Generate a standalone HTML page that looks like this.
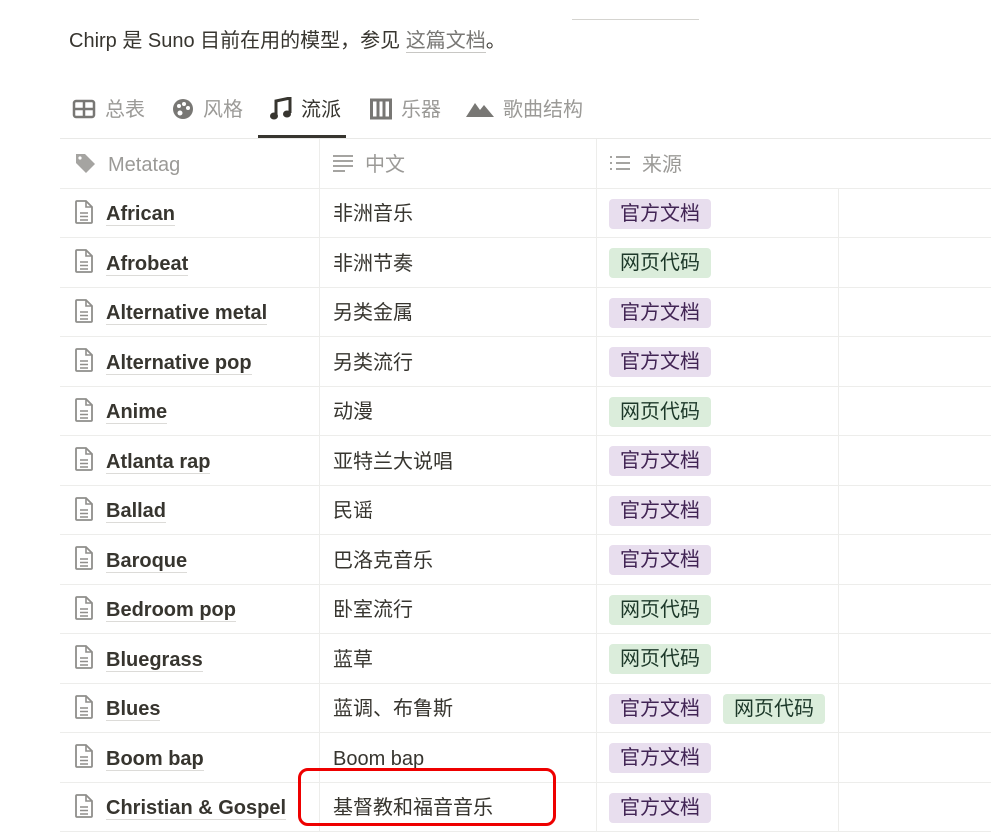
<!DOCTYPE html>
<html><head><meta charset="utf-8"><style>
body{margin:0;width:991px;height:829px;overflow:hidden;background:#fff;font-family:"Liberation Sans","Noto Sans CJK SC",sans-serif;color:#37352f;position:relative}
.p{position:absolute;left:69px;top:26px;font-size:20px;line-height:30px}
.p u{text-decoration:none;color:#787774;border-bottom:1px solid #c8c7c4}
.topline{position:absolute;left:572px;top:19px;width:127px;height:1px;background:#d5d4d0}
.tabs{position:absolute;left:60px;top:92px;height:46px;width:931px;border-bottom:1px solid #e9e9e7}
.tab{position:absolute;top:1px;line-height:34px;font-size:20px;color:#9b9a97;white-space:nowrap}
.tab svg{display:inline-block;vertical-align:middle;margin-right:9px;position:relative;top:-2px}
.tab.on{color:#37352f}
.ul{position:absolute;left:198px;top:43px;width:88px;height:3px;background:#37352f}
.row{position:absolute;left:60px;width:931px;border-bottom:1px solid #ededeb;font-size:20px}
.c{position:absolute;top:2px;height:49px;line-height:49px;white-space:nowrap}
.c svg{display:inline-block;vertical-align:middle;margin-right:12px;position:relative;top:-3px}
.v{position:absolute;top:0;width:1px;height:100%;background:#ededeb}
.n{font-weight:bold;border-bottom:1px solid #dcdbd8;line-height:22px;display:inline-block;color:#37352f}
.tg{display:inline-block;vertical-align:middle;padding:0 11px;border-radius:4px;height:30px;line-height:30px;margin-right:12px;position:relative;top:-1px}
.g1{background:#e8deee;color:#412454}
.g2{background:#dbeddb;color:#1c3829}
</style></head><body>
<div class="topline"></div>
<div class="p">Chirp 是 Suno 目前在用的模型，参见 <u>这篇文档</u>。</div>
<div class="tabs">
 <div class="tab" style="left:12px"><svg width="24" height="20" viewBox="0 0 24 20"><rect x="2" y="2" width="20" height="16" rx="2" fill="none" stroke="#787774" stroke-width="2.5"/><path d="M2 10h20M12 2v16" stroke="#787774" stroke-width="2.5"/></svg>总表</div>
 <div class="tab" style="left:112px"><svg width="22" height="22" viewBox="0 0 22 22"><circle cx="11" cy="11" r="10" fill="#787774"/><circle cx="7" cy="8" r="2" fill="#fff"/><circle cx="12" cy="6" r="2" fill="#fff"/><circle cx="16" cy="10" r="2" fill="#fff"/><circle cx="8" cy="15" r="2.5" fill="#fff"/></svg>风格</div>
 <div class="tab on" style="left:210px"><svg width="22" height="24" viewBox="0 0 22 24"><path d="M6 18V4l14-3v15" stroke="#37352f" stroke-width="3" fill="none"/><ellipse cx="4" cy="19" rx="4" ry="3.5" fill="#37352f"/><ellipse cx="17" cy="17" rx="4" ry="3.5" fill="#37352f"/></svg>流派</div>
 <div class="tab" style="left:310px"><svg width="22" height="22" viewBox="0 0 22 22"><rect x="1.5" y="2" width="19" height="18" fill="none" stroke="#787774" stroke-width="3"/><path d="M8 2v18M14 2v18" stroke="#787774" stroke-width="3"/></svg>乐器</div>
 <div class="tab" style="left:406px"><svg width="28" height="18" viewBox="0 0 28 18"><path d="M0 17L9 3l5 7 4-5 10 12z" fill="#787774"/></svg>歌曲结构</div>
 <div class="ul"></div>
</div>
<div class="row" style="top:139px;height:49px;color:#9b9a97">
 <div class="c" style="left:14px"><svg width="22" height="22" viewBox="0 0 22 22"><path d="M2 2h9l10 10-9 9L2 11z" fill="#a5a4a1"/><circle cx="6" cy="6" r="1.6" fill="#fff"/></svg>Metatag</div>
 <div class="v" style="left:259px"></div>
 <div class="c" style="left:273px"><svg width="20" height="18" viewBox="0 0 20 18"><path d="M0 2h20M0 7h20M0 12h20M0 17h12" stroke="#a5a4a1" stroke-width="2"/></svg>中文</div>
 <div class="v" style="left:536px"></div>
 <div class="c" style="left:550px"><svg width="20" height="18" viewBox="0 0 20 18"><path d="M0 3h2M0 9h2M0 15h2M6 3h14M6 9h14M6 15h14" stroke="#a5a4a1" stroke-width="2"/></svg>来源</div>
</div>
<div id="rows"></div>
<div style="position:absolute;left:298px;top:768px;width:258px;height:58px;border:3px solid #e00;border-radius:10px;box-sizing:border-box"></div>
<script>
var d=[["African","非洲音乐",[1]],["Afrobeat","非洲节奏",[2]],["Alternative metal","另类金属",[1]],["Alternative pop","另类流行",[1]],["Anime","动漫",[2]],["Atlanta rap","亚特兰大说唱",[1]],["Ballad","民谣",[1]],["Baroque","巴洛克音乐",[1]],["Bedroom pop","卧室流行",[2]],["Bluegrass","蓝草",[2]],["Blues","蓝调、布鲁斯",[1,2]],["Boom bap","Boom bap",[1]],["Christian & Gospel","基督教和福音音乐",[1]]];
var h="";d.forEach(function(r,i){var t=188+i*49.5;
var tg=r[2].map(function(k){return '<span class="tg g'+k+'">'+(k==1?"官方文档":"网页代码")+'</span>'}).join("");
h+='<div class="row" style="top:'+t+'px;height:49px"><div class="c" style="left:14px"><svg width="20" height="24" viewBox="0 0 20 24"><path d="M3 1h9l6 6v15a1 1 0 0 1-1 1H3a1 1 0 0 1-1-1V2a1 1 0 0 1 1-1z" fill="none" stroke="#8f8e8b" stroke-width="1.8"/><path d="M12 1v6h6M6 13h8M6 16.5h8M6 20h8" stroke="#8f8e8b" stroke-width="1.6" fill="none"/></svg><span class="n">'+r[0].replace("&","&amp;")+'</span></div><div class="v" style="left:259px"></div><div class="c" style="left:273px">'+r[1]+'</div><div class="v" style="left:536px"></div><div class="c" style="left:549px">'+tg+'</div><div class="v" style="left:778px"></div></div>';});
document.getElementById("rows").innerHTML=h;
</script>
</body></html>
